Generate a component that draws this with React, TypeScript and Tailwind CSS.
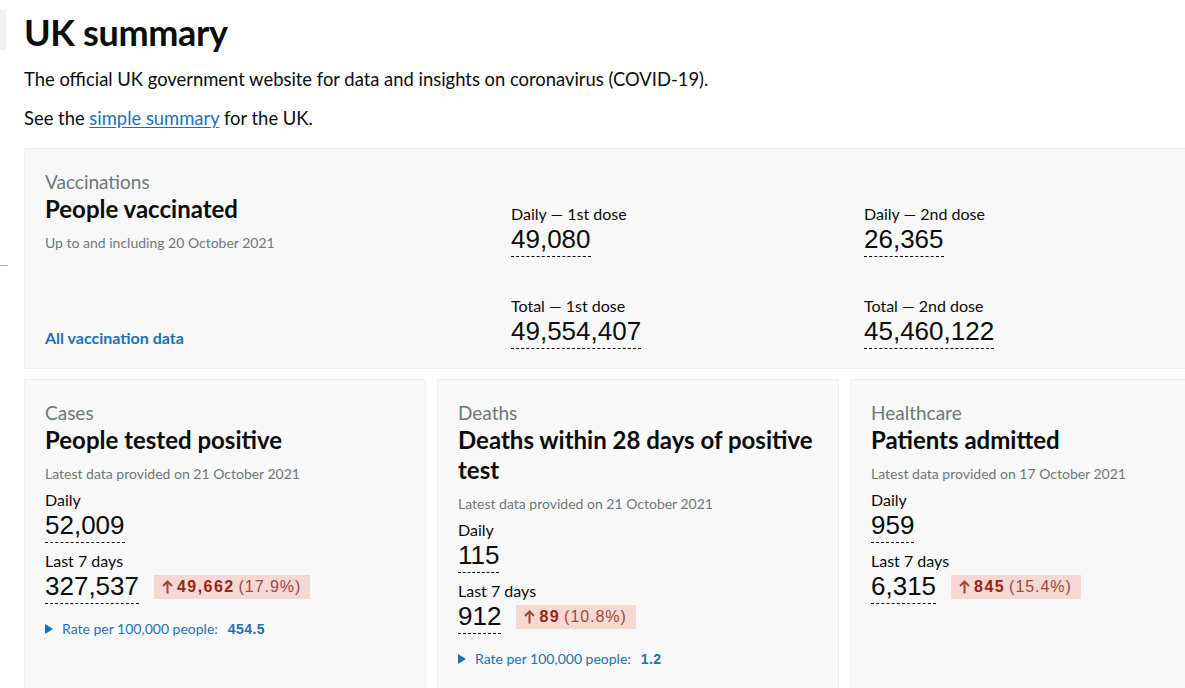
const sans = "font-['Lato','Noto_Sans',sans-serif]";
const num = "font-['Liberation_Sans',Arial,sans-serif]";

type Change = { value: string; pct: string };

const UpArrow = () => (
  <svg width="11" height="14" viewBox="0 0 11 14" className="shrink-0">
    <path d="M5.5 1.5V13.5M1 6L5.5 1.5L10 6" fill="none" stroke="#a0473b" strokeWidth="2" />
  </svg>
);

const Figure = ({ label, value, change }: { label: string; value: string; change?: Change }) => (
  <div>
    <div className="text-[16px] leading-[20px] text-[#0b0c0c]">{label}</div>
    <div className="flex items-start gap-[15px]">
      <span className={`${num} text-[26px] leading-[30px] text-[#0b0c0c] border-b border-dashed border-[#0b0c0c] pb-[2px]`}>
        {value}
      </span>
      {change && (
        <span className={`${num} mt-[4px] flex items-center gap-[4px] bg-[#f6d7d2] text-[#942514] text-[16px] leading-[24px] pl-[8px] pr-[9px] tracking-[0.09em]`}>
          <UpArrow />
          <span className="font-bold">{change.value}</span>
          <span className="text-[#9a4a3e] tracking-[0.06em]">({change.pct})</span>
        </span>
      )}
    </div>
  </div>
);

const Card = ({
  caption,
  title,
  updated,
  daily,
  week,
  change,
  rate,
}: {
  caption: string;
  title: string;
  updated: string;
  daily: string;
  week: string;
  change: Change;
  rate?: string;
}) => (
  <div className="w-[402px] shrink-0 h-[330px] bg-[#f8f8f8] border border-[#efefef] px-5 pt-[20px]">
    <div className="text-[19px] leading-[25px] text-[#6f777b]">{caption}</div>
    <h3 className="text-[24px] leading-[30px] font-bold text-[#0b0c0c]">{title}</h3>
    <p className="mt-[10px] text-[14px] leading-[18px] text-[#6f777b]">{updated}</p>
    <div className="mt-[7px] flex flex-col gap-[8px]">
      <Figure label="Daily" value={daily} />
      <Figure label="Last 7 days" value={week} change={change} />
    </div>
    {rate && (
      <div className="mt-[16px] flex items-center text-[14px] leading-[18px] text-[#1d70b8]">
        <svg width="8" height="10" viewBox="0 0 8 10" className="mr-[9px]">
          <path d="M0 0L8 5L0 10Z" fill="#1d70b8" />
        </svg>
        <span>Rate per 100,000 people:</span>
        <span className={`${num} font-bold ml-[10px] tracking-[0.03em]`}>{rate}</span>
      </div>
    )}
  </div>
);

export default function App() {
  return (
    <div className={`${sans} w-[1185px] h-[688px] overflow-hidden bg-white flex`}>
      <div className="w-[6px] shrink-0 pt-[10px]">
        <div className="h-[40px] bg-[#f3f2f1]" />
        <div className="mt-[215px] h-px w-[8px] bg-[#b1b4b6]" />
      </div>
      <main className="pl-[18px] pt-[10px] flex-1 min-w-0">
        <h1 className="text-[36px] leading-[44px] font-bold text-[#0b0c0c] tracking-[-0.01em]">UK summary</h1>
        <p className="mt-[13px] text-[18.4px] leading-[25px] text-[#0b0c0c]">
          The official UK government website for data and insights on coronavirus (COVID-19).
        </p>
        <p className="mt-[14px] text-[18.4px] leading-[25px] text-[#0b0c0c]">
          See the <a className="text-[#1d70b8] underline underline-offset-2">simple summary</a> for the UK.
        </p>

        <section className="mt-[17px] w-[1200px] h-[221px] bg-[#f8f8f8] border border-[#efefef] flex px-5 pt-[20px] pb-[20px]">
          <div className="w-[466px] shrink-0 flex flex-col">
            <div className="text-[19px] leading-[25px] text-[#6f777b]">Vaccinations</div>
            <h2 className="text-[24px] leading-[30px] font-bold text-[#0b0c0c]">People vaccinated</h2>
            <p className="mt-[10px] text-[14px] leading-[18px] text-[#6f777b]">Up to and including 20 October 2021</p>
            <a className="mt-auto text-[16px] leading-[20px] font-bold text-[#1d70b8]">All vaccination data</a>
          </div>
          <div className="w-[353px] shrink-0 pt-[35px] flex flex-col gap-[39px]">
            <Figure label="Daily — 1st dose" value="49,080" />
            <Figure label="Total — 1st dose" value="49,554,407" />
          </div>
          <div className="w-[353px] shrink-0 pt-[35px] flex flex-col gap-[39px]">
            <Figure label="Daily — 2nd dose" value="26,365" />
            <Figure label="Total — 2nd dose" value="45,460,122" />
          </div>
        </section>

        <div className="mt-[10px] flex gap-[11px]">
          <Card
            caption="Cases"
            title="People tested positive"
            updated="Latest data provided on 21 October 2021"
            daily="52,009"
            week="327,537"
            change={{ value: "49,662", pct: "17.9%" }}
            rate="454.5"
          />
          <Card
            caption="Deaths"
            title="Deaths within 28 days of positive test"
            updated="Latest data provided on 21 October 2021"
            daily="115"
            week="912"
            change={{ value: "89", pct: "10.8%" }}
            rate="1.2"
          />
          <Card
            caption="Healthcare"
            title="Patients admitted"
            updated="Latest data provided on 17 October 2021"
            daily="959"
            week="6,315"
            change={{ value: "845", pct: "15.4%" }}
          />
        </div>
      </main>
    </div>
  );
}
